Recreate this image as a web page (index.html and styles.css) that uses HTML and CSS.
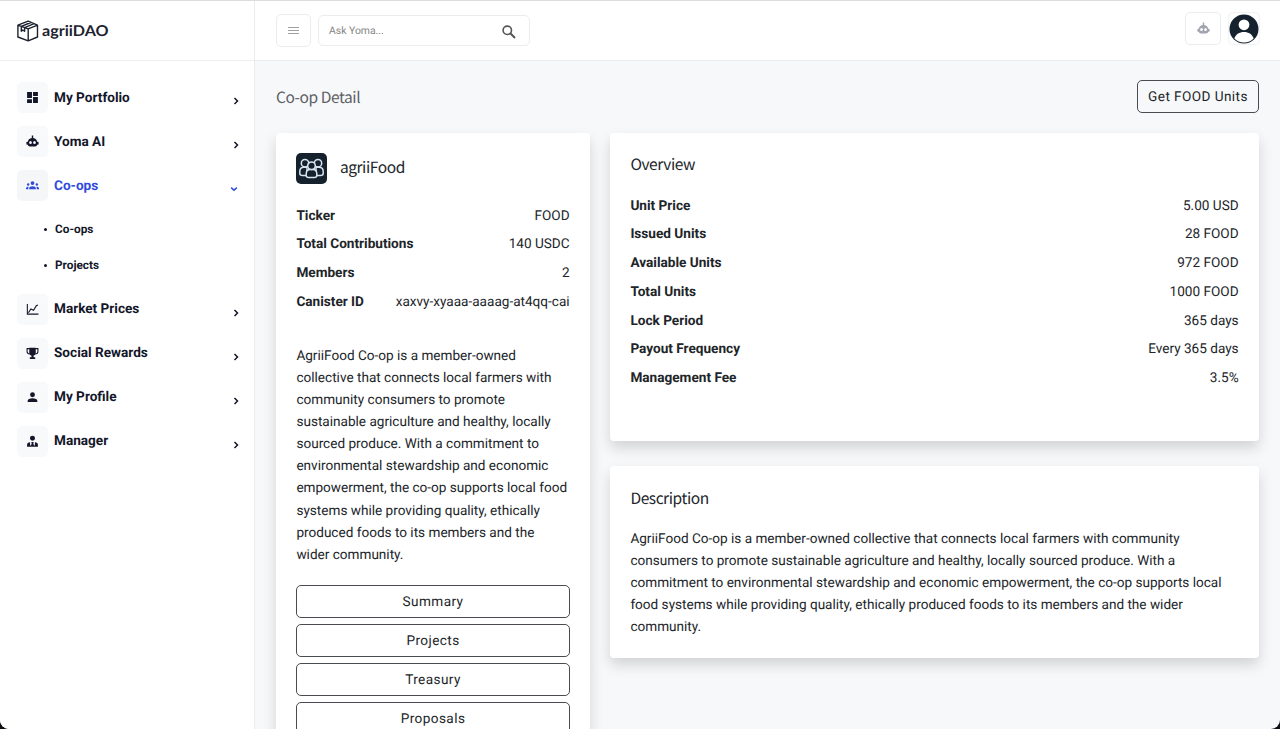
FILE: index.html
```html
<!DOCTYPE html>
<html lang="en">
<head>
<meta charset="utf-8">
<title>agriiDAO</title>
<link rel="stylesheet" href="styles.css">
</head>
<body>
<svg class="defs" width="0" height="0">
  <symbol id="robot" viewBox="0 0 24 24"><path fill="currentColor" fill-rule="evenodd" d="M10.700 1h2.600v4.500c4.200.5 7.200 3.500 7.200 7h1.500a1.300 1.300 0 0 1 1.300 1.300v3a1.300 1.300 0 0 1-1.300 1.300H20.500c-.4 1.800-1.600 3-3.500 3H7c-1.900 0-3.100-1.200-3.500-3H2a1.300 1.300 0 0 1-1.300-1.300v-3A1.300 1.300 0 0 1 2 12.500h1.500c0-3.500 3-6.500 7.200-7zM8.300 11a2.500 2.800 0 1 0 0 5.600 2.500 2.800 0 0 0 0-5.600zm7.400 0a2.500 2.800 0 1 0 0 5.600 2.500 2.800 0 0 0 0-5.600z"/></symbol>
  <symbol id="right" viewBox="0 0 8 8"><path d="M2.500 1 5.500 4 2.500 7" fill="none" stroke="currentColor" stroke-width="1.500"/></symbol>
  <symbol id="down" viewBox="0 0 8 8"><path d="M1.200 2.600 4 5.300 6.800 2.600" fill="none" stroke="currentColor" stroke-width="1.500"/></symbol>
</svg>
<div class="app">
  <aside class="sidebar">
    <div class="brand">
      <svg class="brand-box" viewBox="0 0 22 22" fill="none" stroke="#1c222e" stroke-width="1.400" stroke-linejoin="round"><path d="M.9 5.200 11.200 8.800 20.500 5.200V17L11.200 20.800.9 17ZM.9 5.200 11.200 1.200 20.500 5.200M11.200 8.800V20.500M4.300 6.600V11.200L5.800 10 7.600 11.300V7.600L16.500 3.800M4.300 6.300 13.800 2.500"/></svg>
      <svg class="brand-name" width="68" height="26"><text x="0" y="17.500" textLength="66.500" lengthAdjust="spacingAndGlyphs">agriiDAO</text></svg>
    </div>
    <nav class="menu">
      <a class="item"><span class="tile"><svg viewBox="0 0 24 24"><path fill="currentColor" d="M2 2h9v11H2zM13 2h9v7h-9zM2 15h9v7H2zM13 11h9v11h-9z"/></svg></span>My Portfolio<svg class="chev"><use href="#right"/></svg></a>
      <a class="item"><span class="tile"><svg><use href="#robot"/></svg></span>Yoma AI<svg class="chev"><use href="#right"/></svg></a>
      <a class="item active"><span class="tile"><svg viewBox="0 0 24 24"><g fill="currentColor"><circle cx="12" cy="7.500" r="3.500"/><circle cx="4" cy="10.200" r="2.200"/><circle cx="20" cy="10.200" r="2.200"/><path d="M5.800 19v-1.900c0-2.200 2.700-3.800 6.200-3.800s6.200 1.600 6.200 3.800V19zM0 19v-1.800c0-1.700 1.600-3 4.800-3-.4.800-.6 1.700-.6 2.700V19zM24 19v-1.800c0-1.700-1.600-3-4.800-3 .4.800.6 1.700.6 2.700V19z"/></g></svg></span>Co-ops<svg class="chev"><use href="#down"/></svg></a>
      <div class="submenu">
        <a class="sub">Co-ops</a>
        <a class="sub">Projects</a>
      </div>
      <a class="item"><span class="tile"><svg viewBox="0 0 24 24" fill="none" stroke="currentColor" stroke-width="2"><path d="M2.500 2v18.500H23M4.500 18 9 11l5 2.500L19 5l3-1.500"/></svg></span>Market Prices<svg class="chev"><use href="#right"/></svg></a>
      <a class="item"><span class="tile"><svg viewBox="0 0 24 24"><path fill="currentColor" d="M6 1.500h12V10c0 3-1.600 5-4 5.700V19h3v3H7v-3h3v-3.300C7.600 15 6 13 6 10z"/><path fill="none" stroke="currentColor" stroke-width="2" d="M7 3H2v5.500C2 11 4 13 7.500 13M17 3h5v5.500c0 2.500-2 4.500-5.500 4.500"/></svg></span>Social Rewards<svg class="chev"><use href="#right"/></svg></a>
      <a class="item"><span class="tile"><svg viewBox="0 0 24 24"><g fill="currentColor"><circle cx="12" cy="7" r="4.500"/><path d="M3 20.500v-2.200c0-3.200 4-4.800 9-4.800s9 1.600 9 4.800v2.200z"/></g></svg></span>My Profile<svg class="chev"><use href="#right"/></svg></a>
      <a class="item"><span class="tile"><svg viewBox="0 0 24 24"><g fill="currentColor"><circle cx="12" cy="6" r="4.600"/><path d="M2 21.500v-3.300c0-3 2-4.700 5.500-4.700v4l1.500 3 1.500-5.500-.8-2h4.600l-.8 2 1.500 5.500 1.500-3v-4c3.500 0 5.500 1.700 5.500 4.700v3.300z"/></g></svg></span>Manager<svg class="chev"><use href="#right"/></svg></a>
    </nav>
  </aside>
  <div class="content">
    <header class="topbar">
      <button class="square burger"><svg width="12" height="9" viewBox="0 0 12 9"><path d="M0 1.500h11M0 4.500h11M0 7.500h11" stroke="#a0a0a0" stroke-width="1"/></svg></button>
      <div class="search"><span>Ask Yoma...</span><svg width="14" height="14" viewBox="0 0 14 14" fill="none" stroke="#555"><circle cx="5.300" cy="5.300" r="4.200" stroke-width="1.600"/><path d="M8.300 8.300 13 13" stroke-width="2"/></svg></div>
      <button class="square bot"><svg width="13" height="13"><use href="#robot"/></svg></button>
      <div class="avatar"><svg width="30" height="30" viewBox="0 0 30 30"><circle cx="15" cy="15" r="14.500" fill="#15222d"/><circle cx="15" cy="10.800" r="5.400" fill="#fff"/><path d="M5.300 24.600C6.800 20 10.500 18 15 18s8.200 2 9.700 6.600A13.600 13.600 0 0 1 15 28.500a13.600 13.600 0 0 1-9.700-3.900Z" fill="#fff"/></svg></div>
    </header>
    <main class="page">
      <div class="title-row"><h1>Co-op Detail</h1><button class="outline">Get FOOD Units</button></div>
      <div class="columns">
        <section class="card profile">
          <div class="org">
            <span class="org-icon"><svg width="25" height="22" viewBox="0 0 25 22" fill="#15222d" stroke="#d8e4ef" stroke-width="1.500" stroke-linejoin="round"><circle cx="6" cy="5.200" r="3.700"/><circle cx="19" cy="5.200" r="3.700"/><path d="M3.500 17.500C1.500 17.500.8 17 .8 15.500v-2C.8 10.800 2.500 9.300 5 9.300h3v8.200ZM21.500 17.500c2 0 2.700-.5 2.700-2v-2c0-2.700-1.700-4.200-4.200-4.200h-3v8.200Z"/><path d="M7.200 17.500V16c0-2.800 1.500-4.500 4-4.500h2.600c2.500 0 4 1.700 4 4.500v1.500c0 1.500-1 2-2.500 2H9.700c-1.500 0-2.500-.5-2.500-2Z"/><circle cx="12.500" cy="7.800" r="3.800"/></svg></span>
            <h2>agriiFood</h2>
          </div>
          <dl class="facts">
            <div><dt>Ticker</dt><dd>FOOD</dd></div>
            <div><dt>Total Contributions</dt><dd>140 USDC</dd></div>
            <div><dt>Members</dt><dd>2</dd></div>
            <div><dt>Canister ID</dt><dd>xaxvy-xyaaa-aaaag-at4qq-cai</dd></div>
          </dl>
          <p class="about">AgriiFood Co-op is a member-owned collective that connects local farmers with community consumers to promote sustainable agriculture and healthy, locally sourced produce. With a commitment to environmental stewardship and economic empowerment, the co-op supports local food systems while providing quality, ethically produced foods to its members and the wider community.</p>
          <div class="actions">
            <button class="outline">Summary</button>
            <button class="outline">Projects</button>
            <button class="outline">Treasury</button>
            <button class="outline">Proposals</button>
          </div>
        </section>
        <div class="stack">
          <section class="card overview">
            <h2>Overview</h2>
            <dl class="facts">
              <div><dt>Unit Price</dt><dd>5.00 USD</dd></div>
              <div><dt>Issued Units</dt><dd>28 FOOD</dd></div>
              <div><dt>Available Units</dt><dd>972 FOOD</dd></div>
              <div><dt>Total Units</dt><dd>1000 FOOD</dd></div>
              <div><dt>Lock Period</dt><dd>365 days</dd></div>
              <div><dt>Payout Frequency</dt><dd>Every 365 days</dd></div>
              <div><dt>Management Fee</dt><dd>3.5%</dd></div>
            </dl>
          </section>
          <section class="card description">
            <h2>Description</h2>
            <p>AgriiFood Co-op is a member-owned collective that connects local farmers with community consumers to promote sustainable agriculture and healthy, locally sourced produce. With a commitment to environmental stewardship and economic empowerment, the co-op supports local food systems while providing quality, ethically produced foods to its members and the wider community.</p>
          </section>
        </div>
      </div>
    </main>
  </div>
</div>
</body>
</html>
```
FILE: styles.css
```css
* { box-sizing: border-box; }
html { background: #0d1117; }
body { margin: 0; height: 729px; overflow: hidden; background: #0d1117; font-family: Roboto, sans-serif; font-size: 13.58px; color: #212529; text-rendering: geometricPrecision; }
h1, h2, p, dl, dd { margin: 0; }
button { font-family: inherit; background: none; margin: 0; text-rendering: inherit; }
.defs { display: block; height: 0; }
.app { display: flex; height: 729px; border-top: 1px solid #dcdcdd; border-radius: 0 0 9px 9px; overflow: hidden; background: #f7f8fa; }
.sidebar { width: 255px; flex: none; background: #fff; border-right: 1px solid #ebecee; }
.brand { height: 60px; border-bottom: 1px solid #eeeff0; display: flex; align-items: center; padding-left: 17px; }
.brand-box { width: 22px; height: 22px; }
.brand-name { margin-left: 3px; font-family: Lato, sans-serif; font-weight: 700; font-size: 15px; fill: #1c222e; }
.menu { padding: 21px 14.5px 0 17px; }
.item { display: flex; align-items: center; height: 31px; line-height: 32px; margin-bottom: 13px; font-weight: 700; font-size: 13.6px; color: #14172a; }
.tile { width: 31px; height: 31px; margin-right: 6px; border-radius: 5px; background: #f8f9fa; display: flex; align-items: center; justify-content: center; }
.tile svg { width: 13px; height: 13px; }
.chev { width: 8px; height: 8px; margin: 7px 0 0 auto; }
.active { color: #2f4bdc; }
.active .tile { background: #f5f6f7; }
.active .chev { margin-right: 2px; }
.submenu { margin-top: 19px; padding-left: 26px; }
.sub { display: flex; align-items: center; height: 18px; margin-bottom: 18px; font-size: 11.8px; font-weight: 700; color: #14172a; }
.submenu .sub:last-child { margin-bottom: 19.500px; }
.sub::before { content: ""; width: 3px; height: 3px; border-radius: 50%; background: #14172a; margin: 0 8px 0 1px; }
.content { flex: 1; min-width: 0; display: flex; flex-direction: column; }
.topbar { height: 60px; flex: none; background: #fff; border-bottom: 1px solid #ecedef; display: flex; align-items: center; padding: 0 20px 0 21px; }
.square { width: 35px; height: 33px; border: 1px solid #ebecee; border-radius: 5px; display: flex; align-items: center; justify-content: center; padding: 0; }
.search { width: 212px; height: 31px; margin-left: 7px; border: 1px solid #ebecee; border-radius: 5px; display: flex; align-items: center; justify-content: space-between; padding: 0 13px 0 10px; font-size: 10.4px; color: #858585; }
.search svg { margin-top: 2px; }
.bot { width: 36px; margin: 0 7px 4px auto; color: #a0a4ae; }
.avatar { width: 32px; height: 33px; margin-bottom: 4px; border: 1px solid #f1f2f4; border-radius: 5px; display: flex; align-items: center; justify-content: center; }
.avatar svg { flex: none; }
.page { padding: 19px 21px 0; }
.title-row { display: flex; justify-content: space-between; height: 33px; margin-bottom: 20px; }
h1, h2 { font-family: "Noto Sans CJK SC", sans-serif; font-weight: 400; font-size: 15.5px; line-height: 22px; letter-spacing: -.42px; }
h1 { color: #5d6064; padding-top: 6px; }
.outline { height: 33px; border: 1px solid #484b4f; border-radius: 5px; font-size: 13.6px; letter-spacing: .42px; color: #212529; padding: 2px 10px 0; }
.title-row .outline { width: 122px; padding: 1px 0 0; }
.columns { display: grid; grid-template-columns: 314px 649px; column-gap: 20px; align-items: start; }
.card { background: #fff; border-radius: 4px; box-shadow: 0 7px 14px rgba(0,0,0,.15); padding: 20px 20.4px; }
.profile { height: 640px; }
.org { display: flex; align-items: center; gap: 12.5px; height: 31px; margin-bottom: 17.500px; }
.org h2 { margin-bottom: 3px; }
.org-icon { width: 31px; height: 31px; border-radius: 5px; background: #15222d; display: flex; align-items: center; justify-content: center; }
.facts div { display: flex; justify-content: space-between; line-height: 28.8px; height: 28.8px; }
.facts dt { font-weight: 700; font-size: 13.62px; }
p { line-height: 22.05px; }
.about { margin-top: 28.500px; }
.actions { display: flex; flex-direction: column; gap: 6px; margin: 19px -.4px 0; }
.stack { display: grid; row-gap: 25px; }
.overview { height: 308px; }
.overview h2 { margin: 0 0 16.500px; }
.description { height: 192px; }
.description h2 { margin: 1px 0 19px; }
```
